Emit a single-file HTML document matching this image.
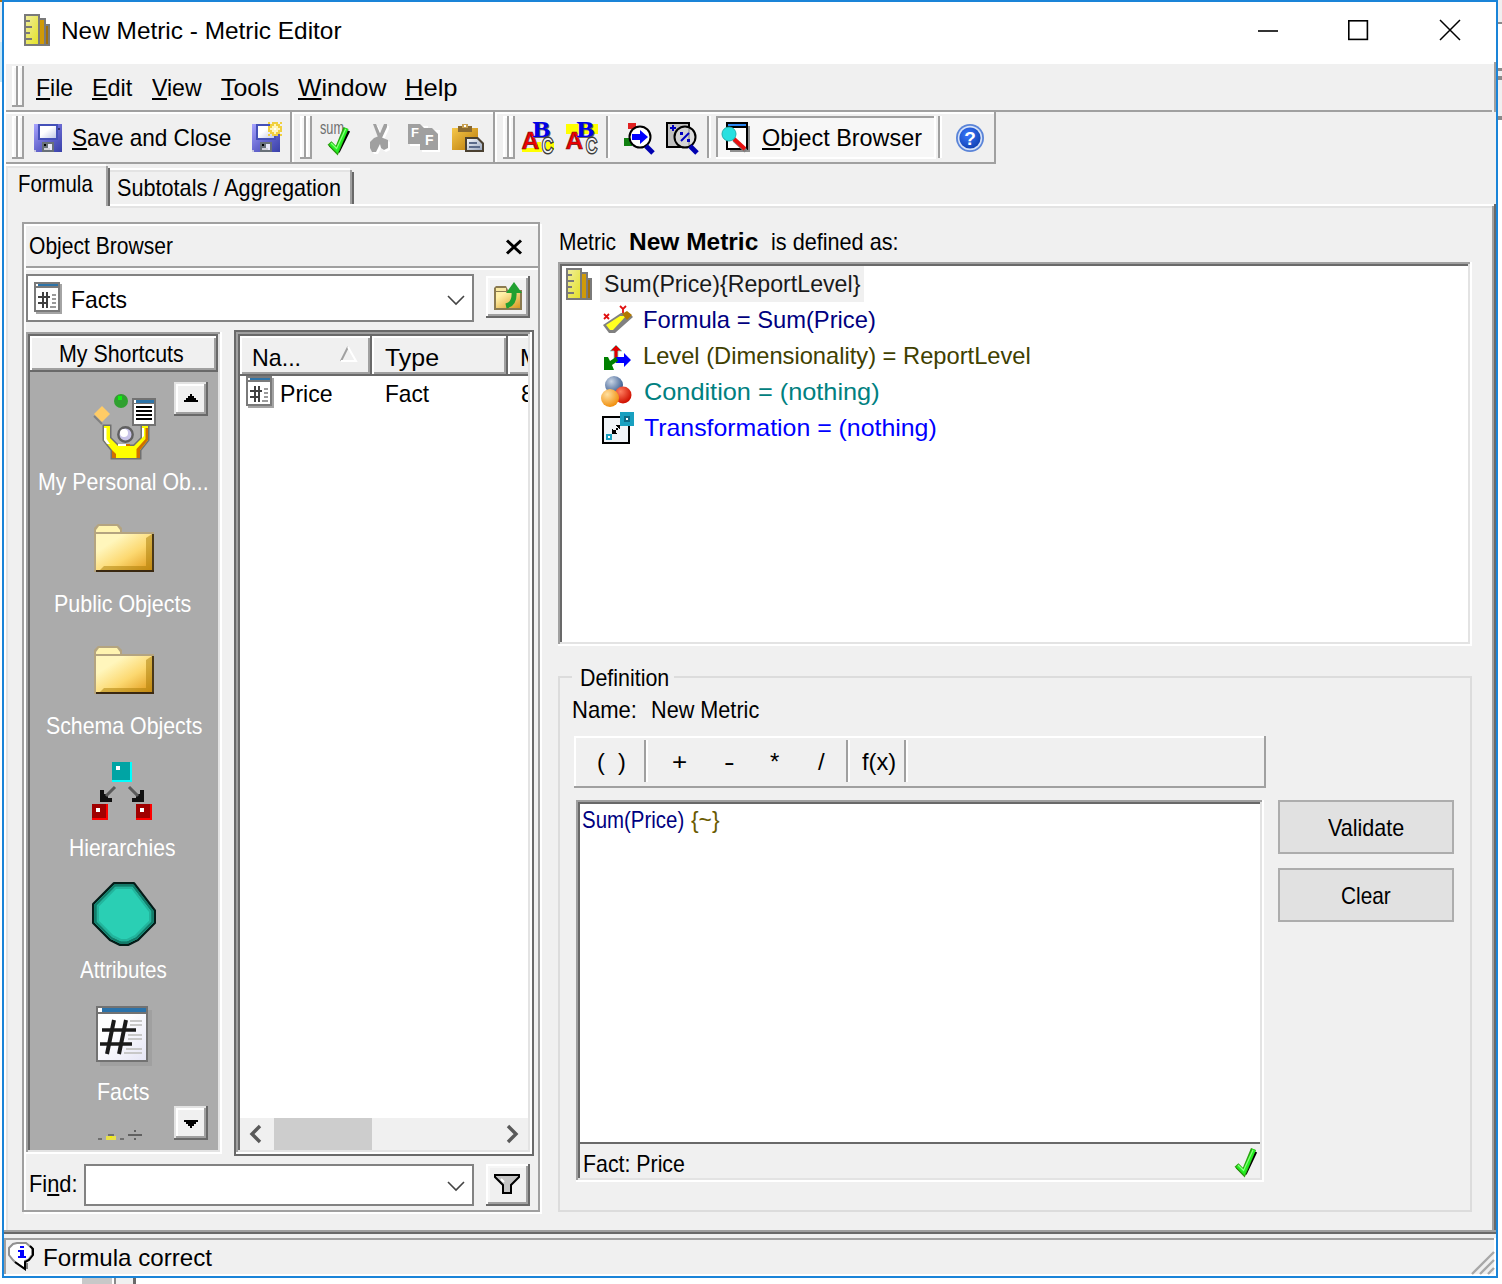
<!DOCTYPE html>
<html lang="en"><head><meta charset="utf-8"><title>New Metric - Metric Editor</title>
<style>
html,body{margin:0;padding:0;background:#fff;}
body{width:1502px;height:1284px;overflow:hidden;font-family:"Liberation Sans",sans-serif;}
#root{position:relative;width:1502px;height:1284px;overflow:hidden;background:#fff;}
.b{position:absolute;box-sizing:border-box;}
.t{position:absolute;white-space:nowrap;line-height:1;transform-origin:0 0;font-family:"Liberation Sans",sans-serif;}
.t u{text-decoration:underline;text-decoration-thickness:2px;text-underline-offset:2px;text-decoration-skip-ink:none;}
svg{position:absolute;overflow:visible;}
.bold{font-weight:bold;}

</style></head>
<body>
<div id="root">
<div class="b" style="left:0px;top:0px;width:2px;height:1284px;background:#FFFFFF;"></div>
<div class="b" style="left:0px;top:0px;width:2px;height:2px;background:#B07010;"></div>
<div class="b" style="left:0px;top:2px;width:2px;height:40px;background:#F0F0F0;"></div>
<div class="b" style="left:0px;top:42px;width:2px;height:40px;background:#C8E8F8;"></div>
<div class="b" style="left:1498px;top:0px;width:4px;height:1278px;background:#F0F0F0;"></div>
<div class="b" style="left:2px;top:0px;width:1496px;height:1278px;background:#1A84D8;"></div>
<div class="b" style="left:4px;top:2px;width:1492px;height:1274px;background:#F0F0F0;"></div>
<div class="b" style="left:4px;top:2px;width:1492px;height:62px;background:#FFFFFF;"></div>
<svg style="left:24px;top:14px" width="26" height="32" viewBox="0 0 26 32" shape-rendering="crispEdges"><linearGradient id="g1" x1="0" y1="0" x2="1" y2="1"><stop offset="0" stop-color="#F0EE9A"/><stop offset="1" stop-color="#E4E22A"/></linearGradient><rect x="14" y="10" width="12" height="22" fill="#7A7A7A"/><rect x="22" y="12" width="2" height="18" fill="#A06E0A"/><rect x="8" y="4" width="14" height="28" fill="#7A7A7A"/><rect x="16" y="6" width="4" height="24" fill="#D09A08"/><rect x="0" y="0" width="16" height="32" fill="#7A7A7A"/><rect x="2" y="2" width="12" height="28" fill="url(#g1)"/><rect x="2" y="6" width="4" height="2" fill="#7A7A7A"/><rect x="2" y="12" width="6" height="2" fill="#7A7A7A"/><rect x="2" y="18" width="4" height="2" fill="#7A7A7A"/><rect x="2" y="24" width="6" height="2" fill="#7A7A7A"/></svg>
<span class="t " style="left:60.97px;top:19.18px;font-size:24px;color:#000;transform:scaleX(1.0164);">New Metric - Metric Editor</span>
<svg style="left:1256px;top:16px" width="210" height="30" viewBox="0 0 210 30"><path d="M2 15 H22" stroke="#000" stroke-width="1.6" fill="none"/><rect x="92.8" y="4.8" width="18.6" height="18.6" stroke="#000" stroke-width="1.6" fill="none"/><path d="M184 4 L204 24 M204 4 L184 24" stroke="#000" stroke-width="1.5" fill="none"/></svg>
<div class="b" style="left:4px;top:64px;width:2px;height:1170px;background:#FFFFFF;"></div>
<div class="b" style="left:12px;top:66px;width:4px;height:41px;background:#FFFFFF;"></div>
<div class="b" style="left:14px;top:68px;width:2px;height:39px;background:#F6F6F6;"></div>
<div class="b" style="left:16px;top:66px;width:2px;height:41px;background:#A0A0A0;"></div>
<div class="b" style="left:12px;top:105px;width:6px;height:2px;background:#A0A0A0;"></div>
<div class="b" style="left:18px;top:66px;width:4px;height:41px;background:#FFFFFF;"></div>
<div class="b" style="left:20px;top:68px;width:2px;height:39px;background:#F6F6F6;"></div>
<div class="b" style="left:22px;top:66px;width:2px;height:41px;background:#A0A0A0;"></div>
<div class="b" style="left:18px;top:105px;width:6px;height:2px;background:#A0A0A0;"></div>
<span class="t " style="left:35.58px;top:76.18px;font-size:24px;color:#000;transform:scaleX(0.9583);"><u>F</u>ile</span>
<span class="t " style="left:92.05px;top:76.18px;font-size:24px;color:#000;transform:scaleX(0.9744);"><u>E</u>dit</span>
<span class="t " style="left:152.00px;top:76.18px;font-size:24px;color:#000;transform:scaleX(0.9615);"><u>V</u>iew</span>
<span class="t " style="left:220.96px;top:76.18px;font-size:24px;color:#000;transform:scaleX(1.0370);"><u>T</u>ools</span>
<span class="t " style="left:298.00px;top:76.18px;font-size:24px;color:#000;transform:scaleX(1.0353);"><u>W</u>indow</span>
<span class="t " style="left:404.87px;top:76.18px;font-size:24px;color:#000;transform:scaleX(1.0652);"><u>H</u>elp</span>
<div class="b" style="left:6px;top:110px;width:1486px;height:2px;background:#A0A0A0;"></div>
<div class="b" style="left:6px;top:162px;width:990px;height:2px;background:#A0A0A0;"></div>
<div class="b" style="left:6px;top:112px;width:988px;height:2px;background:#FFFFFF;"></div>
<div class="b" style="left:290px;top:112px;width:2px;height:50px;background:#A0A0A0;"></div>
<div class="b" style="left:493px;top:112px;width:2px;height:50px;background:#A0A0A0;"></div>
<div class="b" style="left:994px;top:112px;width:2px;height:52px;background:#A0A0A0;"></div>
<div class="b" style="left:292px;top:112px;width:2px;height:50px;background:#FFFFFF;"></div>
<div class="b" style="left:495px;top:112px;width:2px;height:50px;background:#FFFFFF;"></div>
<div class="b" style="left:12px;top:116px;width:4px;height:43px;background:#FFFFFF;"></div>
<div class="b" style="left:14px;top:118px;width:2px;height:41px;background:#F6F6F6;"></div>
<div class="b" style="left:16px;top:116px;width:2px;height:43px;background:#A0A0A0;"></div>
<div class="b" style="left:12px;top:157px;width:6px;height:2px;background:#A0A0A0;"></div>
<div class="b" style="left:18px;top:116px;width:4px;height:43px;background:#FFFFFF;"></div>
<div class="b" style="left:20px;top:118px;width:2px;height:41px;background:#F6F6F6;"></div>
<div class="b" style="left:22px;top:116px;width:2px;height:43px;background:#A0A0A0;"></div>
<div class="b" style="left:18px;top:157px;width:6px;height:2px;background:#A0A0A0;"></div>
<div class="b" style="left:300px;top:116px;width:4px;height:43px;background:#FFFFFF;"></div>
<div class="b" style="left:302px;top:118px;width:2px;height:41px;background:#F6F6F6;"></div>
<div class="b" style="left:304px;top:116px;width:2px;height:43px;background:#A0A0A0;"></div>
<div class="b" style="left:300px;top:157px;width:6px;height:2px;background:#A0A0A0;"></div>
<div class="b" style="left:306px;top:116px;width:4px;height:43px;background:#FFFFFF;"></div>
<div class="b" style="left:308px;top:118px;width:2px;height:41px;background:#F6F6F6;"></div>
<div class="b" style="left:310px;top:116px;width:2px;height:43px;background:#A0A0A0;"></div>
<div class="b" style="left:306px;top:157px;width:6px;height:2px;background:#A0A0A0;"></div>
<div class="b" style="left:503px;top:116px;width:4px;height:43px;background:#FFFFFF;"></div>
<div class="b" style="left:505px;top:118px;width:2px;height:41px;background:#F6F6F6;"></div>
<div class="b" style="left:507px;top:116px;width:2px;height:43px;background:#A0A0A0;"></div>
<div class="b" style="left:503px;top:157px;width:6px;height:2px;background:#A0A0A0;"></div>
<div class="b" style="left:509px;top:116px;width:4px;height:43px;background:#FFFFFF;"></div>
<div class="b" style="left:511px;top:118px;width:2px;height:41px;background:#F6F6F6;"></div>
<div class="b" style="left:513px;top:116px;width:2px;height:43px;background:#A0A0A0;"></div>
<div class="b" style="left:509px;top:157px;width:6px;height:2px;background:#A0A0A0;"></div>
<span class="t " style="left:71.56px;top:126.18px;font-size:24px;color:#000;transform:scaleX(0.9401);"><u>S</u>ave and Close</span>
<div class="b" style="left:606px;top:116px;width:2px;height:42px;background:#A0A0A0;"></div>
<div class="b" style="left:608px;top:116px;width:2px;height:42px;background:#FFFFFF;"></div>
<div class="b" style="left:707px;top:116px;width:2px;height:42px;background:#A0A0A0;"></div>
<div class="b" style="left:709px;top:116px;width:2px;height:42px;background:#FFFFFF;"></div>
<div class="b" style="left:938px;top:116px;width:2px;height:42px;background:#A0A0A0;"></div>
<div class="b" style="left:940px;top:116px;width:2px;height:42px;background:#FFFFFF;"></div>
<div class="b" style="left:716px;top:116px;width:220px;height:43px;background:#F7F7F7;"></div>
<div class="b" style="left:716px;top:116px;width:220px;height:2px;background:#A0A0A0;"></div>
<div class="b" style="left:716px;top:116px;width:2px;height:43px;background:#A0A0A0;"></div>
<div class="b" style="left:716px;top:157px;width:220px;height:2px;background:#FFFFFF;"></div>
<div class="b" style="left:934px;top:116px;width:2px;height:43px;background:#FFFFFF;"></div>
<span class="t " style="left:762.02px;top:126.18px;font-size:24px;color:#000;transform:scaleX(0.9755);"><u>O</u>bject Browser</span>
<div class="b" style="left:110px;top:204px;width:1384px;height:2px;background:#FFFFFF;"></div>
<div class="b" style="left:110px;top:206px;width:1382px;height:2px;background:#E3E3E3;"></div>
<div class="b" style="left:6px;top:164px;width:102px;height:42px;background:#F0F0F0;"></div>
<div class="b" style="left:6px;top:164px;width:100px;height:2px;background:#FFFFFF;"></div>
<div class="b" style="left:4px;top:164px;width:2px;height:42px;background:#FFFFFF;"></div>
<div class="b" style="left:8px;top:166px;width:98px;height:2px;background:#E3E3E3;"></div>
<div class="b" style="left:6px;top:166px;width:2px;height:1064px;background:#E3E3E3;"></div>
<div class="b" style="left:106px;top:166px;width:2px;height:40px;background:#A0A0A0;"></div>
<div class="b" style="left:108px;top:168px;width:2px;height:38px;background:#696969;"></div>
<span class="t " style="left:18.30px;top:172.18px;font-size:24px;color:#000;transform:scaleX(0.8488);">Formula</span>
<div class="b" style="left:110px;top:168px;width:240px;height:2px;background:#FFFFFF;"></div>
<div class="b" style="left:110px;top:170px;width:240px;height:2px;background:#E3E3E3;"></div>
<div class="b" style="left:350px;top:170px;width:2px;height:34px;background:#A0A0A0;"></div>
<div class="b" style="left:352px;top:172px;width:2px;height:32px;background:#696969;"></div>
<span class="t " style="left:117.10px;top:176.18px;font-size:24px;color:#000;transform:scaleX(0.9024);">Subtotals / Aggregation</span>
<div class="b" style="left:1494px;top:62px;width:2px;height:50px;background:#A0A0A0;"></div>
<div class="b" style="left:1492px;top:206px;width:2px;height:1028px;background:#A0A0A0;"></div>
<div class="b" style="left:1494px;top:204px;width:2px;height:1030px;background:#696969;"></div>
<div class="b" style="left:4px;top:1230px;width:1492px;height:2px;background:#A0A0A0;"></div>
<div class="b" style="left:4px;top:1232px;width:1492px;height:2px;background:#696969;"></div>
<div class="b" style="left:4px;top:1234px;width:1492px;height:2px;background:#F0F0F0;"></div>
<div class="b" style="left:4px;top:1238px;width:1490px;height:2px;background:#A0A0A0;"></div>
<span class="t " style="left:42.99px;top:1246.18px;font-size:24px;color:#000;transform:scaleX(1.0060);">Formula correct</span>
<div class="b" style="left:24px;top:224px;width:518px;height:990px;border:2px solid #fff;"></div>
<div class="b" style="left:22px;top:222px;width:518px;height:990px;border:2px solid #A0A0A0;"></div>
<span class="t " style="left:29.12px;top:234.18px;font-size:24px;color:#000;transform:scaleX(0.8773);">Object Browser</span>
<div class="b" style="left:26px;top:266px;width:512px;height:2px;background:#A0A0A0;"></div>
<div class="b" style="left:26px;top:268px;width:512px;height:2px;background:#FFFFFF;"></div>
<div class="b" style="left:26px;top:274px;width:448px;height:48px;background:#FFFFFF;border:2px solid #828282;"></div>
<span class="t " style="left:70.59px;top:288.18px;font-size:24px;color:#000;transform:scaleX(0.9554);">Facts</span>
<div class="b" style="left:486px;top:276px;width:44px;height:42px;background:#F0F0F0;"></div>
<div class="b" style="left:486px;top:276px;width:44px;height:2px;background:#FFFFFF;"></div>
<div class="b" style="left:486px;top:276px;width:2px;height:42px;background:#FFFFFF;"></div>
<div class="b" style="left:488px;top:278px;width:40px;height:2px;background:#F6F6F6;"></div>
<div class="b" style="left:488px;top:278px;width:2px;height:38px;background:#F6F6F6;"></div>
<div class="b" style="left:488px;top:314px;width:42px;height:2px;background:#A0A0A0;"></div>
<div class="b" style="left:526px;top:278px;width:2px;height:40px;background:#A0A0A0;"></div>
<div class="b" style="left:486px;top:316px;width:44px;height:2px;background:#696969;"></div>
<div class="b" style="left:528px;top:276px;width:2px;height:42px;background:#696969;"></div>
<div class="b" style="left:26px;top:332px;width:196px;height:822px;background:#ABABAB;"></div>
<div class="b" style="left:26px;top:332px;width:194px;height:2px;background:#A0A0A0;"></div>
<div class="b" style="left:26px;top:332px;width:2px;height:820px;background:#A0A0A0;"></div>
<div class="b" style="left:28px;top:334px;width:190px;height:2px;background:#696969;"></div>
<div class="b" style="left:28px;top:334px;width:2px;height:816px;background:#696969;"></div>
<div class="b" style="left:26px;top:1152px;width:196px;height:2px;background:#FFFFFF;"></div>
<div class="b" style="left:220px;top:332px;width:2px;height:822px;background:#FFFFFF;"></div>
<div class="b" style="left:28px;top:1150px;width:192px;height:2px;background:#E3E3E3;"></div>
<div class="b" style="left:218px;top:334px;width:2px;height:818px;background:#E3E3E3;"></div>
<div class="b" style="left:30px;top:336px;width:188px;height:36px;background:#F0F0F0;"></div>
<div class="b" style="left:30px;top:336px;width:188px;height:2px;background:#FFFFFF;"></div>
<div class="b" style="left:30px;top:336px;width:2px;height:36px;background:#FFFFFF;"></div>
<div class="b" style="left:32px;top:368px;width:186px;height:2px;background:#A0A0A0;"></div>
<div class="b" style="left:214px;top:338px;width:2px;height:34px;background:#A0A0A0;"></div>
<div class="b" style="left:30px;top:370px;width:188px;height:2px;background:#696969;"></div>
<div class="b" style="left:216px;top:336px;width:2px;height:36px;background:#696969;"></div>
<span class="t " style="left:59.22px;top:342.18px;font-size:24px;color:#000;transform:scaleX(0.8905);">My Shortcuts</span>
<span class="t " style="left:38.22px;top:470.18px;font-size:24px;color:#fff;transform:scaleX(0.8883);">My Personal Ob...</span>
<span class="t " style="left:54.21px;top:592.18px;font-size:24px;color:#fff;transform:scaleX(0.8940);">Public Objects</span>
<span class="t " style="left:45.61px;top:714.18px;font-size:24px;color:#fff;transform:scaleX(0.8879);">Schema Objects</span>
<span class="t " style="left:69.25px;top:836.18px;font-size:24px;color:#fff;transform:scaleX(0.8771);">Hierarchies</span>
<span class="t " style="left:80.00px;top:958.18px;font-size:24px;color:#fff;transform:scaleX(0.8564);">Attributes</span>
<span class="t " style="left:97.21px;top:1080.18px;font-size:24px;color:#fff;transform:scaleX(0.8929);">Facts</span>
<div class="b" style="left:174px;top:382px;width:34px;height:34px;background:#F0F0F0;"></div>
<div class="b" style="left:174px;top:382px;width:34px;height:2px;background:#E3E3E3;"></div>
<div class="b" style="left:174px;top:382px;width:2px;height:34px;background:#E3E3E3;"></div>
<div class="b" style="left:176px;top:384px;width:30px;height:2px;background:#FFFFFF;"></div>
<div class="b" style="left:176px;top:384px;width:2px;height:30px;background:#FFFFFF;"></div>
<div class="b" style="left:176px;top:412px;width:32px;height:2px;background:#A0A0A0;"></div>
<div class="b" style="left:204px;top:384px;width:2px;height:32px;background:#A0A0A0;"></div>
<div class="b" style="left:174px;top:414px;width:34px;height:2px;background:#696969;"></div>
<div class="b" style="left:206px;top:382px;width:2px;height:34px;background:#696969;"></div>
<div class="b" style="left:190px;top:394px;width:2px;height:2px;background:#000;"></div>
<div class="b" style="left:188px;top:396px;width:6px;height:2px;background:#000;"></div>
<div class="b" style="left:186px;top:398px;width:10px;height:2px;background:#000;"></div>
<div class="b" style="left:184px;top:400px;width:14px;height:2px;background:#000;"></div>
<div class="b" style="left:174px;top:1106px;width:34px;height:34px;background:#F0F0F0;"></div>
<div class="b" style="left:174px;top:1106px;width:34px;height:2px;background:#E3E3E3;"></div>
<div class="b" style="left:174px;top:1106px;width:2px;height:34px;background:#E3E3E3;"></div>
<div class="b" style="left:176px;top:1108px;width:30px;height:2px;background:#FFFFFF;"></div>
<div class="b" style="left:176px;top:1108px;width:2px;height:30px;background:#FFFFFF;"></div>
<div class="b" style="left:176px;top:1136px;width:32px;height:2px;background:#A0A0A0;"></div>
<div class="b" style="left:204px;top:1108px;width:2px;height:32px;background:#A0A0A0;"></div>
<div class="b" style="left:174px;top:1138px;width:34px;height:2px;background:#696969;"></div>
<div class="b" style="left:206px;top:1106px;width:2px;height:34px;background:#696969;"></div>
<div class="b" style="left:190px;top:1126px;width:2px;height:2px;background:#000;"></div>
<div class="b" style="left:188px;top:1124px;width:6px;height:2px;background:#000;"></div>
<div class="b" style="left:186px;top:1122px;width:10px;height:2px;background:#000;"></div>
<div class="b" style="left:184px;top:1120px;width:14px;height:2px;background:#000;"></div>
<div class="b" style="left:234px;top:330px;width:300px;height:826px;background:#696969;"></div>
<div class="b" style="left:236px;top:332px;width:296px;height:822px;background:#FFFFFF;"></div>
<div class="b" style="left:236px;top:332px;width:296px;height:2px;background:#A0A0A0;"></div>
<div class="b" style="left:236px;top:332px;width:2px;height:822px;background:#A0A0A0;"></div>
<div class="b" style="left:238px;top:334px;width:292px;height:2px;background:#696969;"></div>
<div class="b" style="left:238px;top:334px;width:2px;height:818px;background:#696969;"></div>
<div class="b" style="left:236px;top:1152px;width:296px;height:2px;background:#FFFFFF;"></div>
<div class="b" style="left:530px;top:332px;width:2px;height:822px;background:#FFFFFF;"></div>
<div class="b" style="left:238px;top:1150px;width:292px;height:2px;background:#E3E3E3;"></div>
<div class="b" style="left:528px;top:334px;width:2px;height:818px;background:#E3E3E3;"></div>
<div class="b" style="left:240px;top:336px;width:132px;height:40px;background:#F0F0F0;"></div>
<div class="b" style="left:240px;top:336px;width:132px;height:2px;background:#FFFFFF;"></div>
<div class="b" style="left:240px;top:336px;width:2px;height:40px;background:#FFFFFF;"></div>
<div class="b" style="left:242px;top:372px;width:130px;height:2px;background:#A0A0A0;"></div>
<div class="b" style="left:368px;top:338px;width:2px;height:38px;background:#A0A0A0;"></div>
<div class="b" style="left:240px;top:374px;width:132px;height:2px;background:#696969;"></div>
<div class="b" style="left:370px;top:336px;width:2px;height:40px;background:#696969;"></div>
<div class="b" style="left:372px;top:336px;width:136px;height:40px;background:#F0F0F0;"></div>
<div class="b" style="left:372px;top:336px;width:136px;height:2px;background:#FFFFFF;"></div>
<div class="b" style="left:372px;top:336px;width:2px;height:40px;background:#FFFFFF;"></div>
<div class="b" style="left:374px;top:372px;width:134px;height:2px;background:#A0A0A0;"></div>
<div class="b" style="left:504px;top:338px;width:2px;height:38px;background:#A0A0A0;"></div>
<div class="b" style="left:372px;top:374px;width:136px;height:2px;background:#696969;"></div>
<div class="b" style="left:506px;top:336px;width:2px;height:40px;background:#696969;"></div>
<div class="b" style="left:508px;top:336px;width:20px;height:40px;background:#F0F0F0;"></div>
<div class="b" style="left:508px;top:336px;width:20px;height:2px;background:#FFFFFF;"></div>
<div class="b" style="left:508px;top:336px;width:2px;height:40px;background:#FFFFFF;"></div>
<div class="b" style="left:510px;top:372px;width:18px;height:2px;background:#A0A0A0;"></div>
<div class="b" style="left:508px;top:374px;width:20px;height:2px;background:#696969;"></div>
<span class="t " style="left:251.56px;top:346.18px;font-size:24px;color:#000;transform:scaleX(0.9681);">Na...</span>
<span class="t " style="left:384.96px;top:346.18px;font-size:24px;color:#000;transform:scaleX(1.0400);">Type</span>
<div class="b" style="left:519px;top:340px;width:9px;height:70px;overflow:hidden"><span class="t" style="left:1px;top:6.2px;font-size:24px">M</span><span class="t" style="left:2px;top:42.2px;font-size:24px">8</span></div>
<svg style="left:340px;top:346px" width="18" height="18" viewBox="0 0 18 18"><path d="M1 15 L8 1" stroke="#A0A0A0" stroke-width="2" fill="none"/><path d="M8 1 L16 15 L1 15" stroke="#fff" stroke-width="2" fill="none"/></svg>
<span class="t " style="left:280.08px;top:382.18px;font-size:24px;color:#000;transform:scaleX(0.9615);">Price</span>
<span class="t " style="left:385.11px;top:382.18px;font-size:24px;color:#000;transform:scaleX(0.9444);">Fact</span>
<div class="b" style="left:240px;top:1118px;width:288px;height:32px;background:#F0F0F0;"></div>
<div class="b" style="left:274px;top:1118px;width:98px;height:32px;background:#CDCDCD;"></div>
<svg style="left:248px;top:1124px" width="16" height="20" viewBox="0 0 16 20"><path d="M12 2 L4 10 L12 18" stroke="#5A5A5A" stroke-width="3.4" fill="none"/></svg>
<svg style="left:504px;top:1124px" width="16" height="20" viewBox="0 0 16 20"><path d="M4 2 L12 10 L4 18" stroke="#5A5A5A" stroke-width="3.4" fill="none"/></svg>
<span class="t " style="left:28.68px;top:1172.18px;font-size:24px;color:#000;transform:scaleX(0.9082);">Fi<u>n</u>d:</span>
<div class="b" style="left:84px;top:1164px;width:390px;height:42px;background:#FFFFFF;border:2px solid #828282;"></div>
<div class="b" style="left:486px;top:1164px;width:44px;height:42px;background:#F0F0F0;"></div>
<div class="b" style="left:486px;top:1164px;width:44px;height:2px;background:#FFFFFF;"></div>
<div class="b" style="left:486px;top:1164px;width:2px;height:42px;background:#FFFFFF;"></div>
<div class="b" style="left:488px;top:1166px;width:40px;height:2px;background:#F6F6F6;"></div>
<div class="b" style="left:488px;top:1166px;width:2px;height:38px;background:#F6F6F6;"></div>
<div class="b" style="left:488px;top:1202px;width:42px;height:2px;background:#A0A0A0;"></div>
<div class="b" style="left:526px;top:1166px;width:2px;height:40px;background:#A0A0A0;"></div>
<div class="b" style="left:486px;top:1204px;width:44px;height:2px;background:#696969;"></div>
<div class="b" style="left:528px;top:1164px;width:2px;height:42px;background:#696969;"></div>
<svg style="left:447px;top:295px" width="18" height="10" viewBox="0 0 18 10"><path d="M1 1 L9 9 L17 1" stroke="#444" stroke-width="1.6" fill="none"/></svg>
<svg style="left:447px;top:1181px" width="18" height="10" viewBox="0 0 18 10"><path d="M1 1 L9 9 L17 1" stroke="#444" stroke-width="1.6" fill="none"/></svg>
<span class="t " style="left:559.25px;top:230.18px;font-size:24px;color:#000;transform:scaleX(0.8730);">Metric</span>
<span class="t bold" style="left:628.96px;top:230.18px;font-size:24px;color:#000;transform:scaleX(1.0202);">New Metric</span>
<span class="t " style="left:770.70px;top:230.18px;font-size:24px;color:#000;transform:scaleX(0.9015);">is defined as:</span>
<div class="b" style="left:558px;top:262px;width:914px;height:384px;background:#FFFFFF;"></div>
<div class="b" style="left:558px;top:262px;width:914px;height:2px;background:#A0A0A0;"></div>
<div class="b" style="left:558px;top:262px;width:2px;height:384px;background:#A0A0A0;"></div>
<div class="b" style="left:560px;top:264px;width:910px;height:2px;background:#696969;"></div>
<div class="b" style="left:560px;top:264px;width:2px;height:380px;background:#696969;"></div>
<div class="b" style="left:558px;top:644px;width:914px;height:2px;background:#FFFFFF;"></div>
<div class="b" style="left:1470px;top:262px;width:2px;height:384px;background:#FFFFFF;"></div>
<div class="b" style="left:560px;top:642px;width:910px;height:2px;background:#E3E3E3;"></div>
<div class="b" style="left:1468px;top:264px;width:2px;height:380px;background:#E3E3E3;"></div>
<div class="b" style="left:600px;top:266px;width:264px;height:36px;background:#F0F0F0;"></div>
<span class="t " style="left:604.03px;top:272.18px;font-size:24px;color:#1a1a1a;transform:scaleX(0.9659);">Sum(Price){ReportLevel}</span>
<span class="t " style="left:643.02px;top:308.18px;font-size:24px;color:#000080;transform:scaleX(0.9892);">Formula = Sum(Price)</span>
<span class="t " style="left:643.03px;top:344.18px;font-size:24px;color:#404000;transform:scaleX(0.9871);">Level (Dimensionality) = ReportLevel</span>
<span class="t " style="left:643.95px;top:380.18px;font-size:24px;color:#008080;transform:scaleX(1.0543);">Condition = (nothing)</span>
<span class="t " style="left:643.96px;top:416.18px;font-size:24px;color:#0000FF;transform:scaleX(1.0357);">Transformation = (nothing)</span>
<div class="b" style="left:558px;top:676px;width:914px;height:536px;border:2px solid #DCDCDC;"></div>
<div class="b" style="left:572px;top:670px;width:102px;height:14px;background:#F0F0F0;"></div>
<span class="t " style="left:580.22px;top:666.18px;font-size:24px;color:#000;transform:scaleX(0.8918);">Definition</span>
<span class="t " style="left:572.16px;top:698.18px;font-size:24px;color:#000;transform:scaleX(0.9179);">Name:</span>
<span class="t " style="left:650.70px;top:698.18px;font-size:24px;color:#000;transform:scaleX(0.9017);">New Metric</span>
<div class="b" style="left:574px;top:736px;width:692px;height:52px;background:#F0F0F0;"></div>
<div class="b" style="left:574px;top:736px;width:692px;height:2px;background:#FFFFFF;"></div>
<div class="b" style="left:574px;top:736px;width:2px;height:52px;background:#FFFFFF;"></div>
<div class="b" style="left:574px;top:786px;width:692px;height:2px;background:#A0A0A0;"></div>
<div class="b" style="left:1264px;top:736px;width:2px;height:52px;background:#A0A0A0;"></div>
<div class="b" style="left:644px;top:740px;width:2px;height:42px;background:#A0A0A0;"></div>
<div class="b" style="left:646px;top:740px;width:2px;height:42px;background:#FFFFFF;"></div>
<div class="b" style="left:846px;top:740px;width:2px;height:42px;background:#A0A0A0;"></div>
<div class="b" style="left:848px;top:740px;width:2px;height:42px;background:#FFFFFF;"></div>
<div class="b" style="left:904px;top:740px;width:2px;height:42px;background:#A0A0A0;"></div>
<div class="b" style="left:906px;top:740px;width:2px;height:42px;background:#FFFFFF;"></div>
<span class="t " style="left:596.52px;top:750.18px;font-size:24px;color:#000;transform:scaleX(0.9815);">(&nbsp;&nbsp;)</span>
<span class="t " style="left:671.92px;top:750.18px;font-size:24px;color:#000;transform:scaleX(1.0833);">+</span>
<span class="t " style="left:723.67px;top:750.18px;font-size:24px;color:#000;transform:scaleX(1.3333);">-</span>
<span class="t " style="left:770.00px;top:750.18px;font-size:24px;color:#000;">*</span>
<span class="t " style="left:818.00px;top:750.18px;font-size:24px;color:#000;">/</span>
<span class="t " style="left:862.00px;top:750.18px;font-size:24px;color:#000;transform:scaleX(0.9848);">f(x)</span>
<div class="b" style="left:576px;top:800px;width:688px;height:382px;background:#FFFFFF;"></div>
<div class="b" style="left:576px;top:800px;width:688px;height:2px;background:#A0A0A0;"></div>
<div class="b" style="left:576px;top:800px;width:2px;height:382px;background:#A0A0A0;"></div>
<div class="b" style="left:578px;top:802px;width:684px;height:2px;background:#696969;"></div>
<div class="b" style="left:578px;top:802px;width:2px;height:378px;background:#696969;"></div>
<div class="b" style="left:576px;top:1180px;width:688px;height:2px;background:#FFFFFF;"></div>
<div class="b" style="left:1262px;top:800px;width:2px;height:382px;background:#FFFFFF;"></div>
<div class="b" style="left:578px;top:1178px;width:684px;height:2px;background:#E3E3E3;"></div>
<div class="b" style="left:1260px;top:802px;width:2px;height:378px;background:#E3E3E3;"></div>
<div class="b" style="left:580px;top:1142px;width:680px;height:2px;background:#696969;"></div>
<div class="b" style="left:580px;top:1144px;width:680px;height:34px;background:#F0F0F0;"></div>
<span class="t " style="left:582.15px;top:808.18px;font-size:24px;color:#000080;transform:scaleX(0.8517);">Sum(Price)</span>
<span class="t " style="left:691.00px;top:808.18px;font-size:24px;color:#6A5A00;transform:scaleX(0.9500);">{~}</span>
<span class="t " style="left:582.72px;top:1152.18px;font-size:24px;color:#000;transform:scaleX(0.8884);">Fact: Price</span>
<div class="b" style="left:1278px;top:800px;width:176px;height:54px;background:#E1E1E1;border:2px solid #ADADAD;"></div>
<div class="b" style="left:1278px;top:868px;width:176px;height:54px;background:#E1E1E1;border:2px solid #ADADAD;"></div>
<span class="t " style="left:1327.50px;top:816.18px;font-size:24px;color:#000;transform:scaleX(0.8988);">Validate</span>
<span class="t " style="left:1340.63px;top:884.18px;font-size:24px;color:#000;transform:scaleX(0.8661);">Clear</span>
<svg style="left:34px;top:124px" width="30" height="28" viewBox="0 0 30 28" shape-rendering="crispEdges"><linearGradient id="g2" x1="0" y1="0" x2="1" y2="1"><stop offset="0" stop-color="#A8A4FF"/><stop offset="0.5" stop-color="#6868D0"/><stop offset="1" stop-color="#3840A8"/></linearGradient><linearGradient id="g3" x1="0" y1="0" x2="1" y2="1"><stop offset="0.4" stop-color="#FFFFFF"/><stop offset="1" stop-color="#C0C8E8"/></linearGradient><rect x="0" y="0" width="28" height="28" fill="url(#g2)"/><rect x="4" y="0" width="20" height="16" fill="#4450B8"/><rect x="6" y="2" width="16" height="12" fill="url(#g3)"/><rect x="8" y="18" width="12" height="10" fill="#687078"/><rect x="10" y="20" width="2" height="2" fill="#000"/><rect x="14" y="20" width="4" height="6" fill="#E8E8F8"/><rect x="10" y="24" width="6" height="2" fill="#D0D0D8"/><rect x="24" y="4" width="2" height="2" fill="#303070"/><rect x="0" y="26" width="2" height="2" fill="#C8C8E0"/></svg>
<svg style="left:252px;top:124px" width="30" height="28" viewBox="0 0 30 28" shape-rendering="crispEdges"><linearGradient id="g4" x1="0" y1="0" x2="1" y2="1"><stop offset="0" stop-color="#A8A4FF"/><stop offset="0.5" stop-color="#6868D0"/><stop offset="1" stop-color="#3840A8"/></linearGradient><linearGradient id="g5" x1="0" y1="0" x2="1" y2="1"><stop offset="0.4" stop-color="#FFFFFF"/><stop offset="1" stop-color="#C0C8E8"/></linearGradient><rect x="0" y="0" width="28" height="28" fill="url(#g4)"/><rect x="4" y="0" width="20" height="16" fill="#4450B8"/><rect x="6" y="2" width="16" height="12" fill="url(#g5)"/><rect x="8" y="18" width="12" height="10" fill="#687078"/><rect x="10" y="20" width="2" height="2" fill="#000"/><rect x="14" y="20" width="4" height="6" fill="#E8E8F8"/><rect x="10" y="24" width="6" height="2" fill="#D0D0D8"/><rect x="24" y="4" width="2" height="2" fill="#303070"/><rect x="0" y="26" width="2" height="2" fill="#C8C8E0"/><rect x="22" y="-2" width="2" height="14" fill="#F0D040"/><rect x="16" y="4" width="14" height="2" fill="#F0D040"/><rect x="18" y="0" width="10" height="10" fill="#F0D040"/><rect x="16" y="-2" width="2" height="2" fill="#F0D040"/><rect x="28" y="-2" width="2" height="2" fill="#F0D040"/><rect x="16" y="10" width="2" height="2" fill="#F0D040"/><rect x="28" y="10" width="2" height="2" fill="#F0D040"/><rect x="20" y="-2" width="2" height="2" fill="#F0D040"/><rect x="24" y="-2" width="2" height="2" fill="#F0D040"/><rect x="20" y="10" width="2" height="2" fill="#F0D040"/><rect x="24" y="10" width="2" height="2" fill="#F0D040"/><rect x="16" y="2" width="2" height="2" fill="#F0D040"/><rect x="16" y="6" width="2" height="2" fill="#F0D040"/><rect x="28" y="2" width="2" height="2" fill="#F0D040"/><rect x="28" y="6" width="2" height="2" fill="#F0D040"/><rect x="20" y="2" width="6" height="6" fill="#FFF6C0"/><rect x="22" y="0" width="2" height="10" fill="#FFF6C0"/><rect x="18" y="4" width="10" height="2" fill="#FFF6C0"/><rect x="22" y="4" width="2" height="2" fill="#FFFFFF"/></svg>
<svg style="left:320px;top:123px" width="34" height="32" viewBox="0 0 34 32"><text x="0" y="11" font-family="Liberation Sans,sans-serif" font-size="19" fill="#6E6E6E" textLength="24" lengthAdjust="spacingAndGlyphs">sum</text><path d="M10.5 21.5 L17.6 28.6 L28 7.5" stroke="#000" stroke-width="4.6" fill="none" stroke-linejoin="bevel"/><path d="M9.5 20 L16.8 27.6 L26 5" stroke="#2CA010" stroke-width="5.4" fill="none"/><path d="M10.5 20.5 L17 27 L26.5 5.5" stroke="#22EE22" stroke-width="3.6" fill="none"/><path d="M11 20 L16.6 25.4 L25.6 6" stroke="#8CFF7C" stroke-width="1.2" fill="none"/></svg>
<svg style="left:370px;top:124px" width="22" height="30" viewBox="0 0 22 30"><g transform="translate(2,2)"><path d="M3 0 L6 0 L12 14 L9 16 Z M14 0 L17 0 L17 3 L11 16 L8 14 Z" fill="#fff"/><path d="M9 12 L13 14 L18 16 L18 24 L14 26 L11 24 L10 20 L8 24 L6 28 L2 28 L0 24 L0 18 L4 14 Z" fill="#fff"/></g><path d="M3 0 L6 0 L12 14 L9 16 Z M14 0 L17 0 L17 3 L11 16 L8 14 Z" fill="#A0A0A0"/><path d="M9 12 L13 14 L18 16 L18 24 L14 26 L11 24 L10 20 L8 24 L6 28 L2 28 L0 24 L0 18 L4 14 Z" fill="#A0A0A0"/></svg>
<svg style="left:408px;top:124px" width="32" height="28" viewBox="0 0 32 28"><rect x="2" y="2" width="18" height="20" fill="#fff"/><rect x="14" y="6" width="18" height="22" fill="#fff"/><polygon points="0,0 12,0 18,6 18,20 0,20" fill="#A0A0A0"/><polygon points="12,4 24,4 30,10 30,26 12,26" fill="#A0A0A0"/><text x="3" y="13" font-family="Liberation Sans,sans-serif" font-weight="bold" font-size="13" fill="#fff">F</text><text x="17" y="21" font-family="Liberation Sans,sans-serif" font-weight="bold" font-size="14" fill="#fff">F</text></svg>
<svg style="left:452px;top:124px" width="32" height="28" viewBox="0 0 32 28"><linearGradient id="g6" x1="0" y1="0" x2="1" y2="1"><stop offset="0" stop-color="#F6C84A"/><stop offset="1" stop-color="#B87808"/></linearGradient><linearGradient id="g7" x1="0" y1="0" x2="1" y2="1"><stop offset="0" stop-color="#F4F6FA"/><stop offset="1" stop-color="#9AA8C0"/></linearGradient><rect x="0" y="4" width="26" height="22" fill="url(#g6)"/><rect x="6" y="2" width="14" height="6" fill="#8A6A30"/><rect x="10" y="0" width="6" height="4" fill="#C8A050"/><rect x="12" y="1" width="2" height="2" fill="#fff"/><polygon points="13,13 26,13 32,19 32,28 13,28" fill="#4A4030"/><polygon points="15,15 25,15 30,20 30,26 15,26" fill="url(#g7)"/><rect x="17" y="18" width="8" height="2" fill="#5A6A8A"/><rect x="17" y="22" width="11" height="2" fill="#5A6A8A"/></svg>
<svg style="left:521px;top:122px" width="34" height="32" viewBox="0 0 34 32"><rect x="1" y="26" width="20" height="4" fill="#FFFF00"/><rect x="16" y="20" width="4" height="6" fill="#FFFF00"/><rect x="25" y="20" width="8" height="8" fill="#FFFF00"/><text x="0.5" y="26.7" font-family="Liberation Sans,sans-serif" font-weight="bold" font-size="24.5" fill="#F00000" stroke="#701010" stroke-width="0.7">A</text><text x="12.3" y="16.1" font-family="Liberation Serif,serif" font-weight="bold" font-size="23" fill="#606060" textLength="18" lengthAdjust="spacingAndGlyphs">B</text><text x="11.3" y="15.3" font-family="Liberation Serif,serif" font-weight="bold" font-size="23" fill="#0000E8" textLength="18" lengthAdjust="spacingAndGlyphs">B</text><text x="21" y="31.4" font-family="Liberation Sans,sans-serif" font-size="21.5" fill="#f4f4f4" stroke="#3C3C3C" stroke-width="3" paint-order="stroke" textLength="11" lengthAdjust="spacingAndGlyphs">C</text></svg>
<svg style="left:565px;top:122px" width="34" height="32" viewBox="0 0 34 32"><rect x="1" y="2" width="32" height="10" fill="#FFFF00"/><text x="0.5" y="26.7" font-family="Liberation Sans,sans-serif" font-weight="bold" font-size="24.5" fill="#F00000" stroke="#701010" stroke-width="0.7">A</text><text x="12.3" y="16.1" font-family="Liberation Serif,serif" font-weight="bold" font-size="23" fill="#606060" textLength="18" lengthAdjust="spacingAndGlyphs">B</text><text x="11.3" y="15.3" font-family="Liberation Serif,serif" font-weight="bold" font-size="23" fill="#0000E8" textLength="18" lengthAdjust="spacingAndGlyphs">B</text><text x="21" y="31.4" font-family="Liberation Sans,sans-serif" font-size="21.5" fill="#f4f4f4" stroke="#3C3C3C" stroke-width="3" paint-order="stroke" textLength="11" lengthAdjust="spacingAndGlyphs">C</text></svg>
<svg style="left:624px;top:122px" width="32" height="32" viewBox="0 0 32 32"><rect x="4" y="1" width="8" height="6" fill="#E02020"/><rect x="0" y="16" width="8" height="8" fill="#108010"/><circle cx="16" cy="15" r="10.5" fill="#fff" stroke="#000" stroke-width="2"/><polygon points="8,12 16,12 16,8 24,15 16,22 16,18 8,18" fill="#0000FF"/><path d="M22 24 L29 31" stroke="#0000B0" stroke-width="5"/></svg>
<svg style="left:666px;top:122px" width="34" height="32" viewBox="0 0 34 32"><rect x="1" y="1" width="22" height="24" fill="#C0C0C0"/><rect x="1" y="1" width="22" height="24" fill="none" stroke="#000" stroke-width="2"/><circle cx="19" cy="15" r="10.5" fill="#D8D8D8" fill-opacity="0.8" stroke="#000" stroke-width="2"/><rect x="4" y="5" width="6" height="2" fill="#0000C0"/><rect x="6" y="3" width="2" height="6" fill="#0000C0"/><path d="M15 19 L23 11" stroke="#0000C0" stroke-width="2"/><rect x="14" y="10" width="3" height="3" fill="#0000C0"/><rect x="21" y="17" width="3" height="3" fill="#0000C0"/><path d="M24 24 L31 31" stroke="#0000B0" stroke-width="5"/></svg>
<svg style="left:722px;top:122px" width="30" height="32" viewBox="0 0 30 32"><rect x="8" y="4" width="20" height="26" fill="#909090"/><rect x="4" y="0" width="22" height="28" fill="#000"/><rect x="6" y="6" width="18" height="20" fill="#fff"/><rect x="6" y="2" width="18" height="2" fill="#2C86F0"/><path d="M12 18 L24 29" stroke="#808080" stroke-width="4"/><path d="M11 16 L23 27" stroke="#E81010" stroke-width="4"/><circle cx="7" cy="12" r="7" fill="#28E0E0" stroke="#20B0B0" stroke-width="1"/></svg>
<svg style="left:956px;top:124px" width="28" height="28" viewBox="0 0 28 28"><radialGradient id="g8" cx="0.4" cy="0.35" r="0.7"><stop offset="0" stop-color="#3A78FF"/><stop offset="1" stop-color="#1040B0"/></radialGradient><circle cx="14" cy="14" r="14" fill="#5A84D8"/><circle cx="14" cy="14" r="12.2" fill="#D6E2F8"/><circle cx="14" cy="14" r="10.6" fill="url(#g8)"/><text x="14" y="21" text-anchor="middle" font-family="Liberation Sans,sans-serif" font-weight="bold" font-size="19" fill="#fff">?</text></svg>
<svg style="left:34px;top:282px" width="28" height="32" viewBox="0 0 28 32" shape-rendering="crispEdges"><rect x="2" y="2" width="26" height="30" fill="#A4A4A4"/><rect x="0" y="0" width="26" height="30" fill="#7A7A7A"/><rect x="2" y="6" width="22" height="22" fill="#fff"/><rect x="2" y="2" width="22" height="2" fill="#2E74A8"/><rect x="2" y="2" width="2" height="2" fill="#fff"/><rect x="8" y="10" width="2" height="16" fill="#404040"/><rect x="12" y="10" width="2" height="16" fill="#404040"/><rect x="4" y="14" width="12" height="2" fill="#404040"/><rect x="4" y="20" width="10" height="2" fill="#404040"/><rect x="18" y="12" width="4" height="2" fill="#9A9A9A"/><rect x="18" y="16" width="4" height="2" fill="#9A9A9A"/><rect x="18" y="20" width="4" height="2" fill="#9A9A9A"/><rect x="16" y="24" width="6" height="2" fill="#9A9A9A"/></svg>
<svg style="left:246px;top:376px" width="28" height="32" viewBox="0 0 28 32" shape-rendering="crispEdges"><rect x="2" y="2" width="26" height="30" fill="#A4A4A4"/><rect x="0" y="0" width="26" height="30" fill="#7A7A7A"/><rect x="2" y="6" width="22" height="22" fill="#fff"/><rect x="2" y="2" width="22" height="2" fill="#2E74A8"/><rect x="2" y="2" width="2" height="2" fill="#fff"/><rect x="8" y="10" width="2" height="16" fill="#404040"/><rect x="12" y="10" width="2" height="16" fill="#404040"/><rect x="4" y="14" width="12" height="2" fill="#404040"/><rect x="4" y="20" width="10" height="2" fill="#404040"/><rect x="18" y="12" width="4" height="2" fill="#9A9A9A"/><rect x="18" y="16" width="4" height="2" fill="#9A9A9A"/><rect x="18" y="20" width="4" height="2" fill="#9A9A9A"/><rect x="16" y="24" width="6" height="2" fill="#9A9A9A"/></svg>
<svg style="left:92px;top:394px" width="66" height="66" viewBox="0 0 66 66"><circle cx="29" cy="7" r="7" fill="#30A030"/><rect x="26" y="2" width="4" height="4" fill="#10F010"/><polygon points="10,12 18,20 10,28 2,20" fill="#FFCC66"/><path d="M2 22 L10 30" stroke="#808080" stroke-width="2"/><rect x="40" y="4" width="24" height="28" fill="#727272"/><rect x="42" y="10" width="20" height="20" fill="#fff"/><rect x="42" y="6" width="20" height="3" fill="#2E74A8"/><rect x="42" y="6" width="2" height="3" fill="#fff"/><rect x="44" y="12" width="16" height="2" fill="#000"/><rect x="44" y="16" width="16" height="2" fill="#000"/><rect x="44" y="20" width="16" height="2" fill="#000"/><rect x="44" y="24" width="16" height="2" fill="#000"/><polygon points="12,32 18,32 18,44 26,52 42,52 50,44 50,32 56,32 56,46 48,56 48,64 20,64 20,56 12,46" fill="#FFFF00" stroke="#707070" stroke-width="3" stroke-linejoin="miter"/><polygon points="12,32 18,32 18,44 26,52 42,52 50,44 50,32 56,32 56,46 48,56 48,64 20,64 20,56 12,46" fill="#FFFF00"/><polygon points="53.5,34 56,34 56,46 48,56 48,64 44.5,64 44.5,55 53.5,45" fill="#D07000"/><polygon points="20,56 24,60 24,64 20,64" fill="#D07000"/><polygon points="12,34 14.5,34 14.5,45 18,50 15,50 12,46" fill="#fff"/><polygon points="50,34 52,34 52,42 50,44" fill="#fff"/><rect x="26" y="50" width="8" height="2" fill="#fff"/><rect x="34" y="50" width="4" height="2" fill="#D07000"/><circle cx="33.5" cy="40.5" r="7.2" fill="#C8C4E8" stroke="#606060" stroke-width="2.4"/><circle cx="32" cy="39" r="4" fill="#fff"/></svg>
<svg style="left:94px;top:524px" width="60" height="48" viewBox="0 0 60 48"><linearGradient id="g9" x1="0" y1="0" x2="1" y2="1"><stop offset="0.25" stop-color="#FFF6BC"/><stop offset="0.6" stop-color="#FCD870"/><stop offset="1" stop-color="#E09818"/></linearGradient><polygon points="0,4 4,0 24,0 28,4 28,8 60,8 60,48 0,48" fill="#B4A480"/><polygon points="2,6 5,2 23,2 26,6 26,8 2,8" fill="#FFF4B0"/><rect x="2" y="10" width="56" height="36" fill="url(#g9)"/><polygon points="6,46 10,42 52,42 52,14 58,10 58,46" fill="#A87C08" fill-opacity="0.5"/><rect x="58" y="10" width="2" height="38" fill="#4A3818"/><rect x="2" y="46" width="58" height="2" fill="#3A2810"/></svg>
<svg style="left:94px;top:646px" width="60" height="48" viewBox="0 0 60 48"><linearGradient id="g10" x1="0" y1="0" x2="1" y2="1"><stop offset="0.25" stop-color="#FFF6BC"/><stop offset="0.6" stop-color="#FCD870"/><stop offset="1" stop-color="#E09818"/></linearGradient><polygon points="0,4 4,0 24,0 28,4 28,8 60,8 60,48 0,48" fill="#B4A480"/><polygon points="2,6 5,2 23,2 26,6 26,8 2,8" fill="#FFF4B0"/><rect x="2" y="10" width="56" height="36" fill="url(#g10)"/><polygon points="6,46 10,42 52,42 52,14 58,10 58,46" fill="#A87C08" fill-opacity="0.5"/><rect x="58" y="10" width="2" height="38" fill="#4A3818"/><rect x="2" y="46" width="58" height="2" fill="#3A2810"/></svg>
<svg style="left:92px;top:762px" width="60" height="58" viewBox="0 0 60 58" shape-rendering="crispEdges"><rect x="20" y="0" width="20" height="20" fill="#00FFFF"/><rect x="20" y="0" width="18" height="18" fill="#00A4A4"/><rect x="24" y="4" width="4" height="4" fill="#fff"/><rect x="0" y="42" width="16" height="16" fill="#FF0000"/><rect x="0" y="42" width="14" height="14" fill="#A00000"/><rect x="4" y="46" width="4" height="4" fill="#fff"/><rect x="44" y="42" width="16" height="16" fill="#FF0000"/><rect x="44" y="42" width="14" height="14" fill="#A00000"/><rect x="48" y="46" width="4" height="4" fill="#fff"/><rect x="8" y="28" width="4" height="12" fill="#101010"/><rect x="8" y="36" width="12" height="4" fill="#101010"/><rect x="12" y="32" width="4" height="4" fill="#101010"/><rect x="48" y="28" width="4" height="12" fill="#101010"/><rect x="40" y="36" width="12" height="4" fill="#101010"/><rect x="44" y="32" width="4" height="4" fill="#101010"/><path d="M23 25 L14 34 M37 25 L46 34" stroke="#5A5A5A" stroke-width="3" shape-rendering="auto"/></svg>
<svg style="left:92px;top:882px" width="64" height="64" viewBox="0 0 64 64"><polygon points="22,1.2 42,1.2 62.8,28.5 62.8,41 46,58 36,62.8 28,62.8 18,58 1.2,41 1.2,22" fill="#2ACFB4" stroke="#041C18" stroke-width="2.4" stroke-linejoin="round"/><polygon points="22.8,3.6 41,3.6 60.4,29 60.4,40 44.6,56 35.6,60.4 28.4,60.4 19.4,56 3.6,40 3.6,23" fill="none" stroke="#147C6A" stroke-width="2.4" stroke-linejoin="round"/><polygon points="23.6,6 40,6 58,29.6 58,39.2 43.4,54 35.2,58 28.8,58 20.6,54 6,39.2 6,24" fill="none" stroke="#22B49C" stroke-width="2" stroke-linejoin="round"/></svg>
<svg style="left:96px;top:1006px" width="56" height="60" viewBox="0 0 56 60" shape-rendering="crispEdges"><linearGradient id="g11" x1="0" y1="0" x2="1" y2="1"><stop offset="0.3" stop-color="#FFFFFF"/><stop offset="1" stop-color="#E6E6F6"/></linearGradient><rect x="4" y="4" width="52" height="56" fill="#A0A0A0"/><rect x="0" y="0" width="52" height="56" fill="#727272"/><rect x="2" y="8" width="48" height="46" fill="url(#g11)"/><rect x="2" y="2" width="48" height="4" fill="#2A72AA"/><rect x="2" y="2" width="4" height="4" fill="#fff"/><rect x="34" y="14" width="12" height="2" fill="#C8C8C8"/><rect x="34" y="18" width="12" height="2" fill="#C8C8C8"/><rect x="32" y="28" width="14" height="2" fill="#C8C8C8"/><rect x="32" y="32" width="14" height="2" fill="#C8C8C8"/><rect x="30" y="42" width="16" height="2" fill="#C8C8C8"/><rect x="28" y="46" width="18" height="2" fill="#C8C8C8"/><g stroke="#1A1A1A" stroke-width="4" fill="none" shape-rendering="auto"><path d="M18 14 L11 48 M30 14 L23 48"/><path d="M6 24 L40 24 M4 38 L36 38" stroke-width="3.4"/></g></svg>
<svg style="left:566px;top:268px" width="26" height="32" viewBox="0 0 26 32" shape-rendering="crispEdges"><linearGradient id="g12" x1="0" y1="0" x2="1" y2="1"><stop offset="0" stop-color="#F0EE9A"/><stop offset="1" stop-color="#E4E22A"/></linearGradient><rect x="14" y="10" width="12" height="22" fill="#7A7A7A"/><rect x="22" y="12" width="2" height="18" fill="#A06E0A"/><rect x="8" y="4" width="14" height="28" fill="#7A7A7A"/><rect x="16" y="6" width="4" height="24" fill="#D09A08"/><rect x="0" y="0" width="16" height="32" fill="#7A7A7A"/><rect x="2" y="2" width="12" height="28" fill="url(#g12)"/><rect x="2" y="6" width="4" height="2" fill="#7A7A7A"/><rect x="2" y="12" width="6" height="2" fill="#7A7A7A"/><rect x="2" y="18" width="4" height="2" fill="#7A7A7A"/><rect x="2" y="24" width="6" height="2" fill="#7A7A7A"/></svg>
<svg style="left:603px;top:305px" width="32" height="30" viewBox="0 0 32 30"><polygon points="0,20 18,8 26,8 30,12 12,28 6,28" fill="#808080"/><polygon points="3,20 17,11 23,11 10,25 7,25" fill="#FFFF20"/><polygon points="19,9 24,6 29,10 24,15" fill="#B07800"/><path d="M1 9 L6 14 M6 9 L1 14" stroke="#E01010" stroke-width="1.8"/><path d="M17 1 L20 4 L23 1 M20 4 L20 8" stroke="#E01010" stroke-width="1.8" fill="none"/></svg>
<svg style="left:604px;top:345px" width="28" height="26" viewBox="0 0 28 26"><polygon points="12,0 18,6 14,6 14,16 10,16 10,6 6,6" fill="#E00000" stroke="#80E0D0" stroke-width="0.8"/><polygon points="12,12 20,12 20,8 27,15 20,22 20,18 12,18" fill="#0000FF"/><polygon points="0,12 4,12 6,16 12,12 14,16 8,20 10,25 0,25" fill="#008000"/></svg>
<svg style="left:601px;top:376px" width="32" height="32" viewBox="0 0 32 32"><radialGradient id="g13" cx="0.35" cy="0.3" r="0.7"><stop offset="0" stop-color="#C8D4E4"/><stop offset="1" stop-color="#3A5C90"/></radialGradient><radialGradient id="g14" cx="0.35" cy="0.3" r="0.7"><stop offset="0" stop-color="#FFE0A0"/><stop offset="1" stop-color="#F09010"/></radialGradient><radialGradient id="g15" cx="0.35" cy="0.3" r="0.7"><stop offset="0" stop-color="#FF8060"/><stop offset="1" stop-color="#D01000"/></radialGradient><circle cx="13" cy="9" r="9" fill="url(#g13)"/><circle cx="22" cy="19" r="8.5" fill="url(#g15)"/><circle cx="9" cy="22" r="9" fill="url(#g14)"/></svg>
<svg style="left:602px;top:412px" width="32" height="32" viewBox="0 0 32 32" shape-rendering="crispEdges"><rect x="0" y="4" width="28" height="28" fill="#000"/><rect x="2" y="6" width="24" height="24" fill="#F0F4F8"/><rect x="18" y="0" width="14" height="14" fill="#18A0C0"/><rect x="22" y="4" width="6" height="6" fill="#0C6C88"/><rect x="24" y="6" width="2" height="2" fill="#fff"/><rect x="4" y="22" width="6" height="6" fill="#18A0C0"/><rect x="6" y="24" width="2" height="2" fill="#fff"/><polygon points="10,22 15,22 10,17" fill="#000"/><polygon points="13,13 18,13 18,18" fill="#000"/><rect x="12" y="18" width="2" height="2" fill="#000"/><rect x="14" y="16" width="2" height="2" fill="#000"/></svg>
<svg style="left:494px;top:282px" width="30" height="30" viewBox="0 0 30 30"><linearGradient id="g16" x1="0" y1="0" x2="1" y2="1"><stop offset="0.2" stop-color="#FFF0A8"/><stop offset="1" stop-color="#D89820"/></linearGradient><polygon points="0,6 2,4 12,4 14,8 28,8 28,28 0,28" fill="#8A7A50"/><rect x="2" y="10" width="24" height="16" fill="url(#g16)"/><rect x="2" y="6" width="10" height="3" fill="#F8E8A0"/><path d="M12 24 Q21 22 20 10" stroke="#20A030" stroke-width="5" fill="none"/><polygon points="12,11 20,0 28,11" fill="#20A030"/></svg>
<svg style="left:494px;top:1174px" width="26" height="20" viewBox="0 0 26 20"><polygon points="1,1 25,1 25,3 17,11 17,19 9,19 9,11 1,3" fill="#C4C4C4" stroke="#000" stroke-width="2"/><path d="M7 5 L10 8" stroke="#fff" stroke-width="2"/></svg>
<svg style="left:8px;top:1242px" width="28" height="30" viewBox="0 0 28 30"><path d="M9 1 L18 1 L24 6 L24 13 L20 18 L17 19 L17 27 L8 21 L5 18 L1 13 L1 6 L5 2 Z" fill="#fff" stroke="#909090" stroke-width="2"/><path d="M22 4 L25 7 L25 13 L21 18 L17 20 L17 27 L7 20" fill="none" stroke="#000" stroke-width="2"/><path d="M19 21 L19 27" stroke="#808080" stroke-width="2"/><rect x="12" y="4" width="4" height="2" fill="#0000FF"/><rect x="10" y="8" width="6" height="2" fill="#0000FF"/><rect x="12" y="8" width="4" height="8" fill="#0000FF"/><rect x="10" y="14" width="8" height="2" fill="#0000FF"/></svg>
<svg style="left:1234px;top:1147px" width="26" height="30" viewBox="0 0 26 30"><path d="M3.5 19.5 L10.6 26.6 L21 4.5" stroke="#000" stroke-width="4.6" fill="none" stroke-linejoin="bevel"/><path d="M2.5 18 L9.8 25.6 L19.5 2" stroke="#2CA010" stroke-width="5.4" fill="none"/><path d="M3.5 18.5 L10 25 L20 2.5" stroke="#22EE22" stroke-width="3.6" fill="none"/><path d="M4 18 L9.6 23.4 L19 3" stroke="#8CFF7C" stroke-width="1.2" fill="none"/></svg>
<svg style="left:505px;top:239px" width="18" height="16" viewBox="0 0 18 16"><path d="M2 1.5 L16 14.5 M16 1.5 L2 14.5" stroke="#000" stroke-width="3" fill="none"/></svg>
<div class="b" style="left:4px;top:1238px;width:2px;height:36px;background:#A0A0A0;"></div>
<div class="b" style="left:4px;top:1274px;width:1492px;height:2px;background:#FFFFFF;"></div>
<div class="b" style="left:1494px;top:1238px;width:2px;height:38px;background:#FFFFFF;"></div>
<svg style="left:1470px;top:1250px" width="26" height="26" viewBox="0 0 26 26"><path d="M2 24 L24 2 M10 24 L24 10 M18 24 L24 18" stroke="#A8A8A8" stroke-width="2.4" fill="none"/></svg>
<div class="b" style="left:98px;top:1138px;width:4px;height:2px;background:#707070;"></div>
<div class="b" style="left:106px;top:1136px;width:10px;height:4px;background:#E8E04A;"></div>
<div class="b" style="left:108px;top:1134px;width:6px;height:2px;background:#707070;"></div>
<div class="b" style="left:110px;top:1136px;width:2px;height:2px;background:#F4F000;"></div>
<div class="b" style="left:120px;top:1138px;width:4px;height:2px;background:#707070;"></div>
<div class="b" style="left:128px;top:1134px;width:14px;height:2px;background:#606060;"></div>
<div class="b" style="left:134px;top:1130px;width:2px;height:2px;background:#606060;"></div>
<div class="b" style="left:134px;top:1138px;width:2px;height:2px;background:#606060;"></div>
<div class="b" style="left:1498px;top:22px;width:4px;height:2px;background:#8A8A8A;"></div>
<div class="b" style="left:1498px;top:24px;width:4px;height:44px;background:#FFFFFF;"></div>
<div class="b" style="left:1498px;top:68px;width:4px;height:3px;background:#8A8A8A;"></div>
<div class="b" style="left:1498px;top:76px;width:4px;height:4px;background:#8A8A8A;"></div>
<div class="b" style="left:1498px;top:116px;width:4px;height:4px;background:#8A8A8A;"></div>
<div class="b" style="left:1498px;top:120px;width:4px;height:1158px;background:#FFFFFF;"></div>
<div class="b" style="left:82px;top:1278px;width:30px;height:6px;background:#C8C8C8;"></div>
<div class="b" style="left:114px;top:1278px;width:2px;height:6px;background:#8A8A8A;"></div>
<div class="b" style="left:116px;top:1278px;width:17px;height:6px;background:#F0F0F0;"></div>
<div class="b" style="left:133px;top:1278px;width:3px;height:6px;background:#6A6A6A;"></div>
</div>
</body></html>
